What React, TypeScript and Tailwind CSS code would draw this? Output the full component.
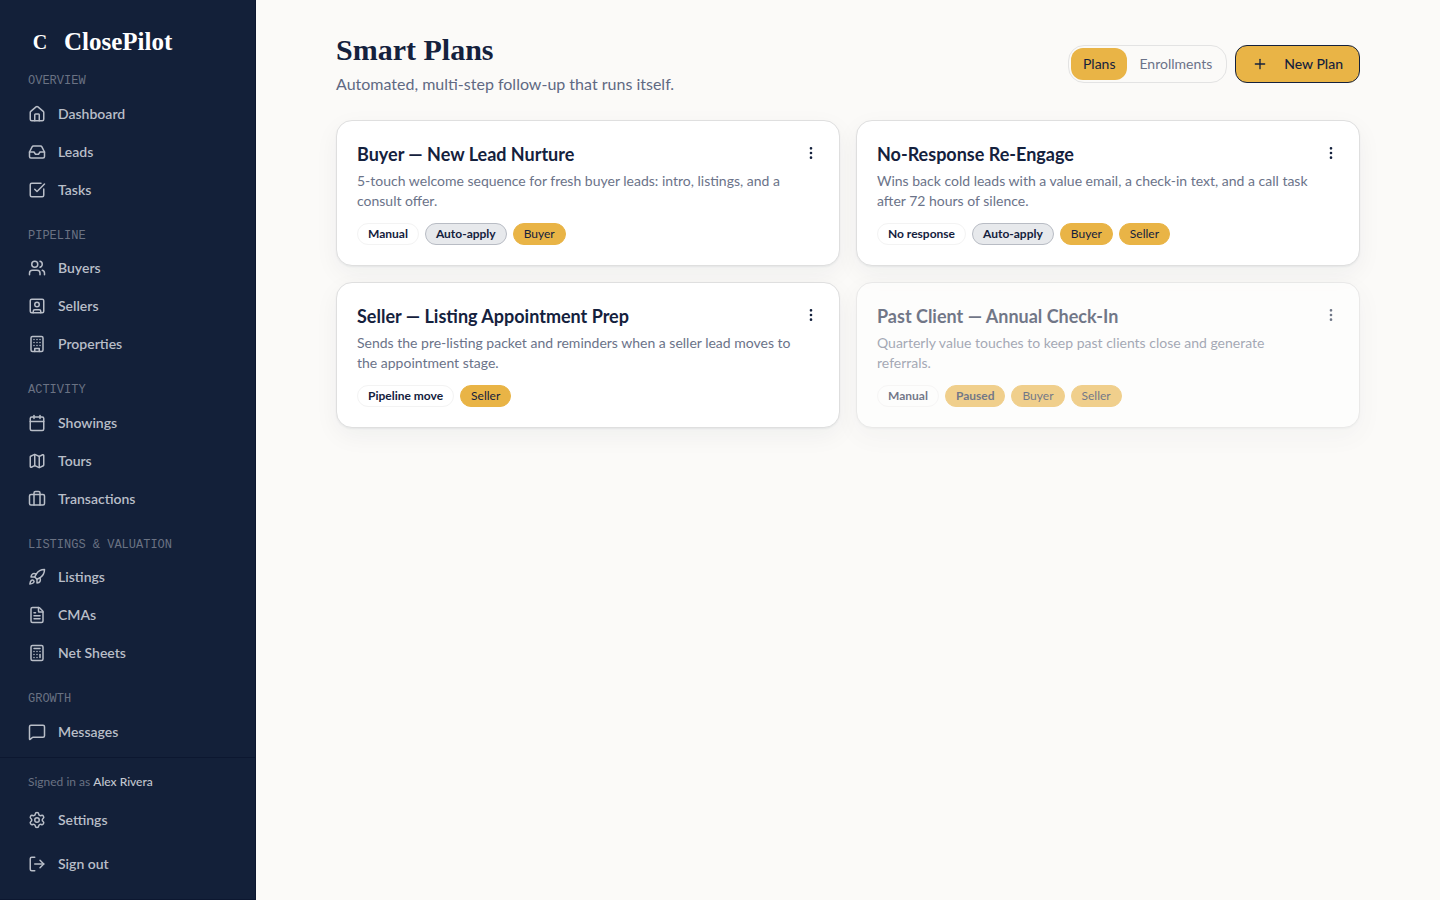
import React, { useState } from 'react';
import {
  Calculator, Calendar, EllipsisVertical, FileText, House, Inbox, LogOut, Map,
  MessageSquare, Plus, Rocket, Settings, SquareCheckBig, Users,
} from 'lucide-react';

interface IconProps {
  size?: number;
}

interface NavGroup {
  label: string;
  items: { name: string; icon: React.ComponentType<IconProps> }[];
}

interface Plan {
  title: string;
  description: string;
  trigger: string;
  autoApply?: boolean;
  paused?: boolean;
  audiences: string[];
}

function SvgIcon({ size = 18, children }: IconProps & { children: React.ReactNode }) {
  return (
    <svg
      width={size}
      height={size}
      viewBox="0 0 24 24"
      fill="none"
      stroke="currentColor"
      strokeWidth={2}
      strokeLinecap="round"
      strokeLinejoin="round"
      aria-hidden="true"
    >
      {children}
    </svg>
  );
}

function SellerIcon(props: IconProps) {
  return (
    <SvgIcon {...props}>
      <rect x="3" y="3" width="18" height="18" rx="2" />
      <circle cx="12" cy="10" r="3" />
      <path d="M7 21v-2a2 2 0 0 1 2-2h6a2 2 0 0 1 2 2v2" />
    </SvgIcon>
  );
}

function BuildingIcon(props: IconProps) {
  return (
    <SvgIcon {...props}>
      <rect x="4" y="2" width="16" height="20" rx="2" />
      <path d="M9 22v-4h6v4" />
      <path d="M8 6h.01M12 6h.01M16 6h.01M8 10h.01M12 10h.01M16 10h.01M8 14h.01M12 14h.01M16 14h.01" />
    </SvgIcon>
  );
}

function BriefcaseIcon(props: IconProps) {
  return (
    <SvgIcon {...props}>
      <rect x="2" y="6" width="20" height="14" rx="2" />
      <path d="M16 20V4a2 2 0 0 0-2-2h-4a2 2 0 0 0-2 2v16" />
    </SvgIcon>
  );
}

const NAV: NavGroup[] = [
  {
    label: 'Overview',
    items: [
      { name: 'Dashboard', icon: House },
      { name: 'Leads', icon: Inbox },
      { name: 'Tasks', icon: SquareCheckBig },
    ],
  },
  {
    label: 'Pipeline',
    items: [
      { name: 'Buyers', icon: Users },
      { name: 'Sellers', icon: SellerIcon },
      { name: 'Properties', icon: BuildingIcon },
    ],
  },
  {
    label: 'Activity',
    items: [
      { name: 'Showings', icon: Calendar },
      { name: 'Tours', icon: Map },
      { name: 'Transactions', icon: BriefcaseIcon },
    ],
  },
  {
    label: 'Listings & Valuation',
    items: [
      { name: 'Listings', icon: Rocket },
      { name: 'CMAs', icon: FileText },
      { name: 'Net Sheets', icon: Calculator },
    ],
  },
  {
    label: 'Growth',
    items: [{ name: 'Messages', icon: MessageSquare }],
  },
];

const PLANS: Plan[] = [
  {
    title: 'Buyer — New Lead Nurture',
    description: '5-touch welcome sequence for fresh buyer leads: intro, listings, and a consult offer.',
    trigger: 'Manual',
    autoApply: true,
    audiences: ['Buyer'],
  },
  {
    title: 'No-Response Re-Engage',
    description: 'Wins back cold leads with a value email, a check-in text, and a call task after 72 hours of silence.',
    trigger: 'No response',
    autoApply: true,
    audiences: ['Buyer', 'Seller'],
  },
  {
    title: 'Seller — Listing Appointment Prep',
    description: 'Sends the pre-listing packet and reminders when a seller lead moves to the appointment stage.',
    trigger: 'Pipeline move',
    audiences: ['Seller'],
  },
  {
    title: 'Past Client — Annual Check-In',
    description: 'Quarterly value touches to keep past clients close and generate referrals.',
    trigger: 'Manual',
    paused: true,
    audiences: ['Buyer', 'Seller'],
  },
];

const TABS = ['Plans', 'Enrollments'];

const navLink = 'flex h-9 items-center gap-3 px-7 text-sm font-semibold text-[#b9bec8] hover:text-white';
const badge = 'flex h-[22px] items-center rounded-full border px-2.5 text-xs';

function PlanCard({ plan }: { plan: Plan }) {
  return (
    <article
      className={`rounded-2xl border border-[#dfdfdf] bg-white p-5 shadow-[0_1px_2px_rgba(20,33,61,0.06),0_8px_24px_rgba(20,33,61,0.05)] ${plan.paused ? 'opacity-60' : ''}`}
    >
      <div className="flex items-start justify-between gap-4">
        <h2 className="text-lg leading-[26px] font-bold">{plan.title}</h2>
        <button type="button" aria-label={`Actions for ${plan.title}`} className="flex h-6 items-center">
          <EllipsisVertical size={16} />
        </button>
      </div>
      <p className="mt-1 pr-5 text-sm text-[#6b7389]">{plan.description}</p>
      <div className="mt-3 flex flex-wrap gap-1.5">
        <span className={`${badge} border-[#f3f3f3] font-bold`}>{plan.trigger}</span>
        {plan.autoApply && <span className={`${badge} border-[#b8bcc4] bg-[#e7e9ec] font-bold`}>Auto-apply</span>}
        {plan.paused && <span className={`${badge} border-[#e9b446] bg-[#e9b446] font-bold`}>Paused</span>}
        {plan.audiences.map((audience) => (
          <span key={audience} className={`${badge} border-[#e9b446] bg-[#e9b446]`}>{audience}</span>
        ))}
      </div>
    </article>
  );
}

export default function App() {
  const [tab, setTab] = useState('Plans');

  return (
    <div className="flex h-screen bg-[#fbfaf8] font-['Lato',sans-serif] text-[#14213d]">
      {/* Sidebar */}
      <aside className="flex w-64 shrink-0 flex-col border-r border-b border-[#0c1730] bg-[#132039]">
        <div className="flex items-center gap-3 px-7 pt-[26px] pb-[15px] font-['Liberation_Serif',serif] font-bold text-white">
          <span className="w-6 text-center text-xl leading-8">C</span>
          <span className="text-[25px] leading-8">ClosePilot</span>
        </div>
        <nav className="flex min-h-0 flex-1 flex-col gap-5 overflow-hidden">
          {NAV.map((group) => (
            <div key={group.label}>
              <h3 className="mb-1.5 px-7 font-['Liberation_Mono',monospace] text-xs leading-snug text-[#6a7283] uppercase">
                {group.label}
              </h3>
              <div className="flex flex-col gap-0.5">
                {group.items.map(({ name, icon: Icon }) => (
                  <a key={name} href="#" className={navLink}>
                    <Icon size={18} />
                    {name}
                  </a>
                ))}
              </div>
            </div>
          ))}
        </nav>
        <div className="border-t border-[#0c1730] pt-4 pb-[17px]">
          <p className="mb-3 px-7 text-xs text-[#6a7283]">
            Signed in as <span className="font-medium text-[#c4c8d0]">Alex Rivera</span>
          </p>
          <div className="flex flex-col gap-2">
            <a href="#" className={navLink}>
              <Settings size={18} />
              Settings
            </a>
            <button type="button" className={navLink}>
              <LogOut size={18} />
              Sign out
            </button>
          </div>
        </div>
      </aside>

      <main className="min-w-0 flex-1 overflow-y-auto px-8 py-8">
        <div className="mx-auto max-w-5xl">
          {/* Page header */}
          <header className="mb-6 flex items-center justify-between gap-4">
            <div>
              <h1 className="mb-1 font-['Liberation_Serif',serif] text-3xl font-bold">Smart Plans</h1>
              <p className="text-base text-[#5f6983]">Automated, multi-step follow-up that runs itself.</p>
            </div>
            <div className="flex items-center gap-2">
              <div className="flex h-[38px] items-center rounded-2xl border border-[#e3e3e3] p-0.5">
                {TABS.map((name) => (
                  <button
                    key={name}
                    type="button"
                    onClick={() => setTab(name)}
                    className={`h-8 rounded-xl px-3 text-sm ${tab === name ? 'bg-[#e9b446] text-[#14213d]' : 'text-[#6b7389]'}`}
                  >
                    {name}
                  </button>
                ))}
              </div>
              <button
                type="button"
                className="flex h-[38px] items-center gap-4 rounded-xl border border-[#14213d] bg-[#e9b446] px-4 text-sm font-medium"
              >
                <Plus size={16} />
                New Plan
              </button>
            </div>
          </header>

          <section className="grid grid-cols-1 gap-4 md:grid-cols-2">
            {PLANS.map((plan) => (
              <PlanCard key={plan.title} plan={plan} />
            ))}
          </section>
        </div>
      </main>
    </div>
  );
}
